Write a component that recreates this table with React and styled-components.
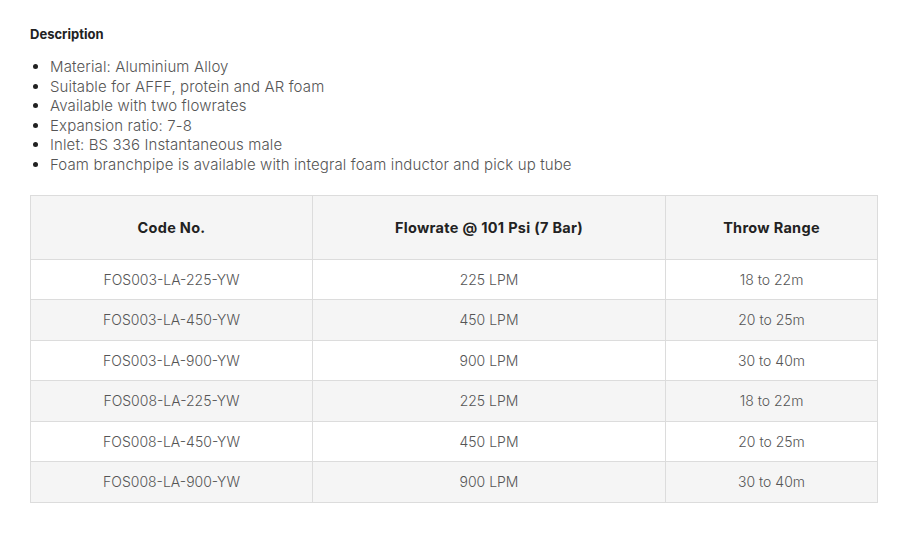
import React from 'react'
import styled, { createGlobalStyle } from 'styled-components'

const GlobalStyle = createGlobalStyle`
  body {
    margin: 0;
    background: #fff;
    font-family: Inter, 'Liberation Sans', sans-serif;
  }
`

const rows = [
  ['FOS003-LA-225-YW', '225 LPM', '18 to 22m'],
  ['FOS003-LA-450-YW', '450 LPM', '20 to 25m'],
  ['FOS003-LA-900-YW', '900 LPM', '30 to 40m'],
  ['FOS008-LA-225-YW', '225 LPM', '18 to 22m'],
  ['FOS008-LA-450-YW', '450 LPM', '20 to 25m'],
  ['FOS008-LA-900-YW', '900 LPM', '30 to 40m'],
]

const features = [
  'Material: Aluminium Alloy',
  'Suitable for AFFF, protein and AR foam',
  'Available with two flowrates',
  'Expansion ratio: 7-8',
  'Inlet: BS 336 Instantaneous male',
  'Foam branchpipe is available with integral foam inductor and pick up tube',
]

const App = () => {
  return (
    <Wrapper>
      <GlobalStyle />
      <Heading>Description</Heading>
      <List>
        {features.map((f) => (
          <li key={f}>{f}</li>
        ))}
      </List>
      <Table>
        <colgroup>
          <Col $w={282} />
          <Col $w={353} />
          <Col />
        </colgroup>
        <thead>
          <tr>
            <Th>Code No.</Th>
            <Th>Flowrate @ 101 Psi (7 Bar)</Th>
            <Th>Throw Range</Th>
          </tr>
        </thead>
        <tbody>
          {rows.map((r, i) => (
            <Row key={r[0]} $striped={i % 2 === 1}>
              {r.map((c) => (
                <Td key={c}>{c}</Td>
              ))}
            </Row>
          ))}
        </tbody>
      </Table>
    </Wrapper>
  )
}

const Wrapper = styled.section`
  padding: 26px 26px 0 30px;
`

const Heading = styled.h4`
  margin: 0 0 15px;
  font-size: 13px;
  font-weight: 700;
  color: #222;
`

const List = styled.ul`
  margin: 0 0 20px;
  padding-left: 20px;
  color: #555;
  font-size: 15px;
  font-weight: 300;
  letter-spacing: 0.12px;
  line-height: 19.6px;
  li::marker {
    color: #222;
  }
`

const Table = styled.table`
  width: 848px;
  border-collapse: collapse;
  table-layout: fixed;
`

const Col = styled.col`
  width: ${(p) => (p.$w ? `${p.$w}px` : 'auto')};
`

const Th = styled.th`
  height: 63px;
  padding: 0;
  border: 1px solid #dcdcdc;
  background: #f5f5f5;
  text-align: center;
  font-size: 14.5px;
  font-weight: 700;
  letter-spacing: 0.3px;
  color: #222;
`

const Row = styled.tr`
  background: ${(p) => (p.$striped ? '#f5f5f5' : '#fff')};
`

const Td = styled.td`
  height: 39.5px;
  padding: 0;
  border: 1px solid #dcdcdc;
  text-align: center;
  font-size: 14px;
  font-weight: 300;
  color: #555;
`

export default App
